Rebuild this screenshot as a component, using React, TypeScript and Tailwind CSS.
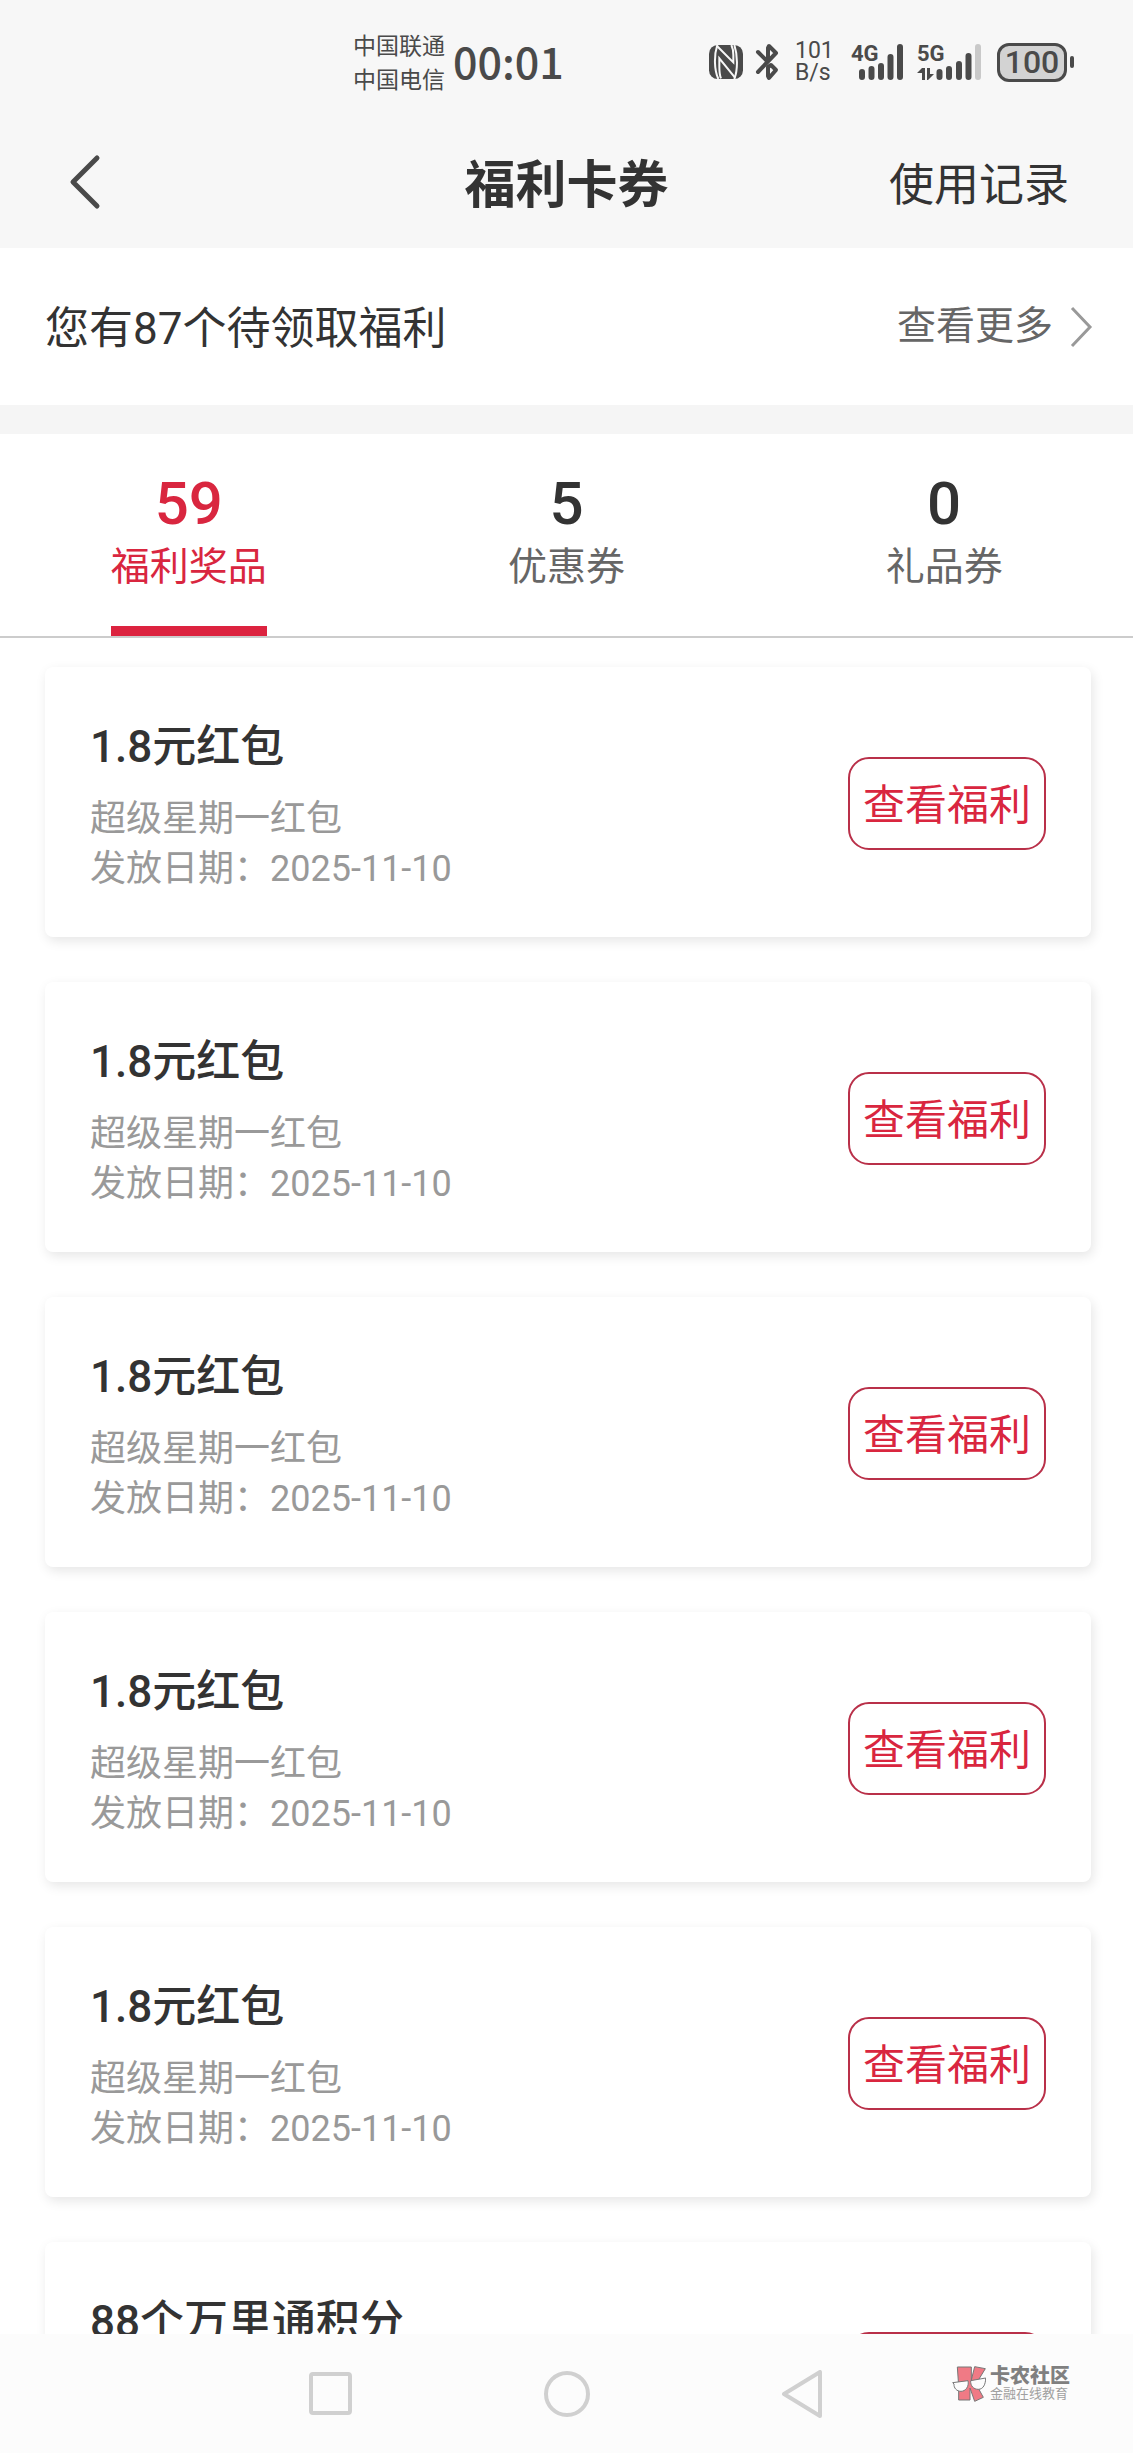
import { useState } from "react";

const tabs = [
  { id: "prize", count: 59, label: "福利奖品" },
  { id: "coupon", count: 5, label: "优惠券" },
  { id: "gift", count: 0, label: "礼品券" },
];

const rewards = [
  { id: 1, title: "1.8元红包", source: "超级星期一红包", date: "2025-11-10" },
  { id: 2, title: "1.8元红包", source: "超级星期一红包", date: "2025-11-10" },
  { id: 3, title: "1.8元红包", source: "超级星期一红包", date: "2025-11-10" },
  { id: 4, title: "1.8元红包", source: "超级星期一红包", date: "2025-11-10" },
  { id: 5, title: "1.8元红包", source: "超级星期一红包", date: "2025-11-10" },
  { id: 6, title: "88个万里通积分" },
];

function NfcIcon() {
  return (
    <svg width="34" height="34" viewBox="0 0 102 102" fill="none" aria-hidden="true">
      <rect width="102" height="102" rx="26" fill="#4a4a4a" />
      <g stroke="#f7f7f7" strokeWidth="6">
        <path d="M25 0C15 30 15 74 28 102" />
        <path d="M24 3 73 52V30C73 18 71 8 67 0" />
        <path d="M36 100C31 90 31 80 31 64V40L78 98" />
        <path d="M76 0C86 30 87 74 76 102" />
      </g>
    </svg>
  );
}

function BluetoothIcon() {
  return (
    <svg width="24" height="38" viewBox="0 0 24 38" fill="none" stroke="#4a4a4a" strokeWidth="4" strokeLinecap="round" strokeLinejoin="round" aria-hidden="true">
      <path d="M3 9 12 18M3 29 21 10 14 3 13 5V14" />
      <path d="M13 24 16 22 21 27 14 35 13 33Z" />
    </svg>
  );
}

function StatusBar() {
  return (
    <div className="flex h-[124px] items-center justify-between pl-[353px] pr-[59px] text-[#4a4a4a]">
      <div className="flex items-center gap-2">
        <div className="pt-[3px] text-[23px] leading-[34px]">
          <p>中国联通</p>
          <p>中国电信</p>
        </div>
        <time className="pb-1 font-['Noto_Sans_CJK_SC',sans-serif] text-[43px] font-medium leading-[60px]">00:01</time>
      </div>
      <div className="flex items-center">
        <NfcIcon />
        <span className="ml-3">
          <BluetoothIcon />
        </span>
        <div className="ml-4 w-10 text-[23px] leading-[22px]">
          <p>101</p>
          <p>B/s</p>
        </div>
        <svg className="ml-4" width="54" height="38" viewBox="0 0 54 38" stroke="#4a4a4a" strokeWidth="6" strokeLinecap="round" aria-label="4G">
          <text x="0" y="18" fontSize="22" fontWeight="700" fill="#4a4a4a" stroke="none">4G</text>
          <path d="M11 29v5M20.500 26v8M30 23v11M39.500 14v20M49 4v30" />
        </svg>
        <svg className="ml-3" width="68" height="38" viewBox="0 0 68 38" stroke="#4a4a4a" strokeWidth="6" strokeLinecap="round" aria-label="5G">
          <text x="0" y="18" fontSize="22" fontWeight="700" fill="#4a4a4a" stroke="none">5G</text>
          <path d="M0 30 5 25h3v12H5v-7ZM10 25h3v6h4l-6 6h-1Z" fill="#4a4a4a" stroke="none" />
          <path d="M22.500 29v5M32 26v8M42 21v13M51.500 13v21" />
          <path d="M61 4v30" stroke="#c9c9c9" />
        </svg>
        <div className="ml-3 flex h-[39px] w-[70px] items-center justify-center rounded-xl border-3 border-[#4a4a4a] bg-[#d3d3d3] text-[32px] font-medium leading-none">
          100
        </div>
        <span className="ml-[3px] h-3 w-1 rounded-full bg-[#4a4a4a]" />
      </div>
    </div>
  );
}

function CommunityLogo() {
  return (
    <div className="absolute right-[63px] top-[30px] flex items-center gap-1">
      <svg width="34" height="38" viewBox="0 0 102 114" stroke="#777" strokeWidth="3" aria-hidden="true">
        <path d="M16 9H58V48L68 8 100 14 72 60 94 100 68 112 54 72V108H20V66Z" fill="#f07a85" />
        <path d="M2 56 48 50C52 68 40 82 27 82 14 82 5 72 6 60Z" fill="#fcfcfc" />
        <path d="M56 50 101 42C101 60 94 76 79 76 65 76 55 66 56 50Z" fill="#fcfcfc" />
      </svg>
      <div>
        <p className="text-[20px] font-black leading-[22px] text-[#808080]">卡农社区</p>
        <p className="text-[13px] leading-[14px] text-[#a0a0a0]">金融在线教育</p>
      </div>
    </div>
  );
}

export default function App() {
  const [active, setActive] = useState("prize");

  return (
    <div className="flex h-screen flex-col overflow-hidden bg-white font-[Roboto,'Noto_Sans_CJK_SC',sans-serif] text-[#333]">
      <header className="shrink-0 bg-[#f7f7f7]">
        <StatusBar />
        <nav className="grid h-[124px] grid-cols-3 items-center px-16">
          <button type="button" aria-label="返回" className="w-10 pb-2">
            <svg width="40" height="60" viewBox="0 0 40 60" fill="none" stroke="#4a4a4a" strokeWidth="5" strokeLinecap="round" strokeLinejoin="round">
              <path d="M33 6 9 30 33 54" />
            </svg>
          </button>
          <h1 className="text-center text-[51px] font-bold">福利卡券</h1>
          <a href="#records" className="text-right text-[45px]">使用记录</a>
        </nav>
      </header>

      <section className="flex h-[157px] shrink-0 items-center justify-between pl-[45px] pr-10">
        <p className="pt-1 text-[44px]">您有87个待领取福利</p>
        <a href="#more" className="flex items-center gap-4 text-[39px] text-[#666]">
          查看更多
          <svg width="24" height="42" viewBox="0 0 24 42" fill="none" stroke="#999" strokeWidth="3">
            <path d="M3 2 21 21 3 40" />
          </svg>
        </a>
      </section>

      <div className="h-[29px] shrink-0 bg-[#f5f5f5]" />

      <div role="tablist" className="grid shrink-0 grid-cols-3 border-b-2 border-[#ccc]">
        {tabs.map((tab) => {
          const isActive = tab.id === active;
          return (
            <button
              key={tab.id}
              type="button"
              role="tab"
              aria-selected={isActive}
              onClick={() => setActive(tab.id)}
              className={`flex flex-col items-center pt-10 ${isActive ? "text-[#d9263f]" : "text-[#333]"}`}
            >
              <span className="text-[60px] font-medium leading-[60px]">{tab.count}</span>
              <span
                className={`border-b-10 pb-[34px] pt-2 text-[39px] leading-[50px] ${
                  isActive ? "border-[#dc233f]" : "border-transparent text-[#666]"
                }`}
              >
                {tab.label}
              </span>
            </button>
          );
        })}
      </div>

      <main className="min-h-0 flex-1 overflow-y-auto pl-[45px] pr-[42px] pt-[29px] [scrollbar-width:none]">
        <ul className="space-y-[45px]">
          {rewards.map((item) => (
            <li
              key={item.id}
              className="flex items-center justify-between rounded-lg bg-white px-[45px] pb-[43px] pt-[46px] shadow-[2px_4px_12px_rgba(0,0,0,0.1)]"
            >
              <div className="min-h-[181px]">
                <h2 className="mb-[13px] text-[44px] font-medium leading-[68px]">{item.title}</h2>
                {item.source && <p className="text-[36px] leading-[50px] text-[#999]">{item.source}</p>}
                {item.date && <p className="text-[36px] leading-[50px] text-[#999]">发放日期：{item.date}</p>}
              </div>
              <button
                type="button"
                className="h-[93px] rounded-[21px] border-2 border-[#b93049] px-[13px] pt-1 text-[42px] text-[#d9263f]"
              >
                查看福利
              </button>
            </li>
          ))}
        </ul>
      </main>

      <footer className="relative flex h-[119px] shrink-0 items-center justify-center gap-[188px] bg-[#fcfcfc]">
        <button type="button" aria-label="最近任务">
          <svg width="48" height="48" viewBox="0 0 48 48" fill="none" stroke="#d0d0d0" strokeWidth="4">
            <rect x="4" y="4" width="39" height="39" rx="2" />
          </svg>
        </button>
        <button type="button" aria-label="主页">
          <svg width="48" height="48" viewBox="0 0 48 48" fill="none" stroke="#d0d0d0" strokeWidth="4">
            <circle cx="24" cy="24" r="21" />
          </svg>
        </button>
        <button type="button" aria-label="后退">
          <svg width="48" height="48" viewBox="0 0 48 48" fill="none" stroke="#d0d0d0" strokeWidth="4" strokeLinejoin="round">
            <path d="M41 2V46L5 24Z" />
          </svg>
        </button>
        <CommunityLogo />
      </footer>
    </div>
  );
}
